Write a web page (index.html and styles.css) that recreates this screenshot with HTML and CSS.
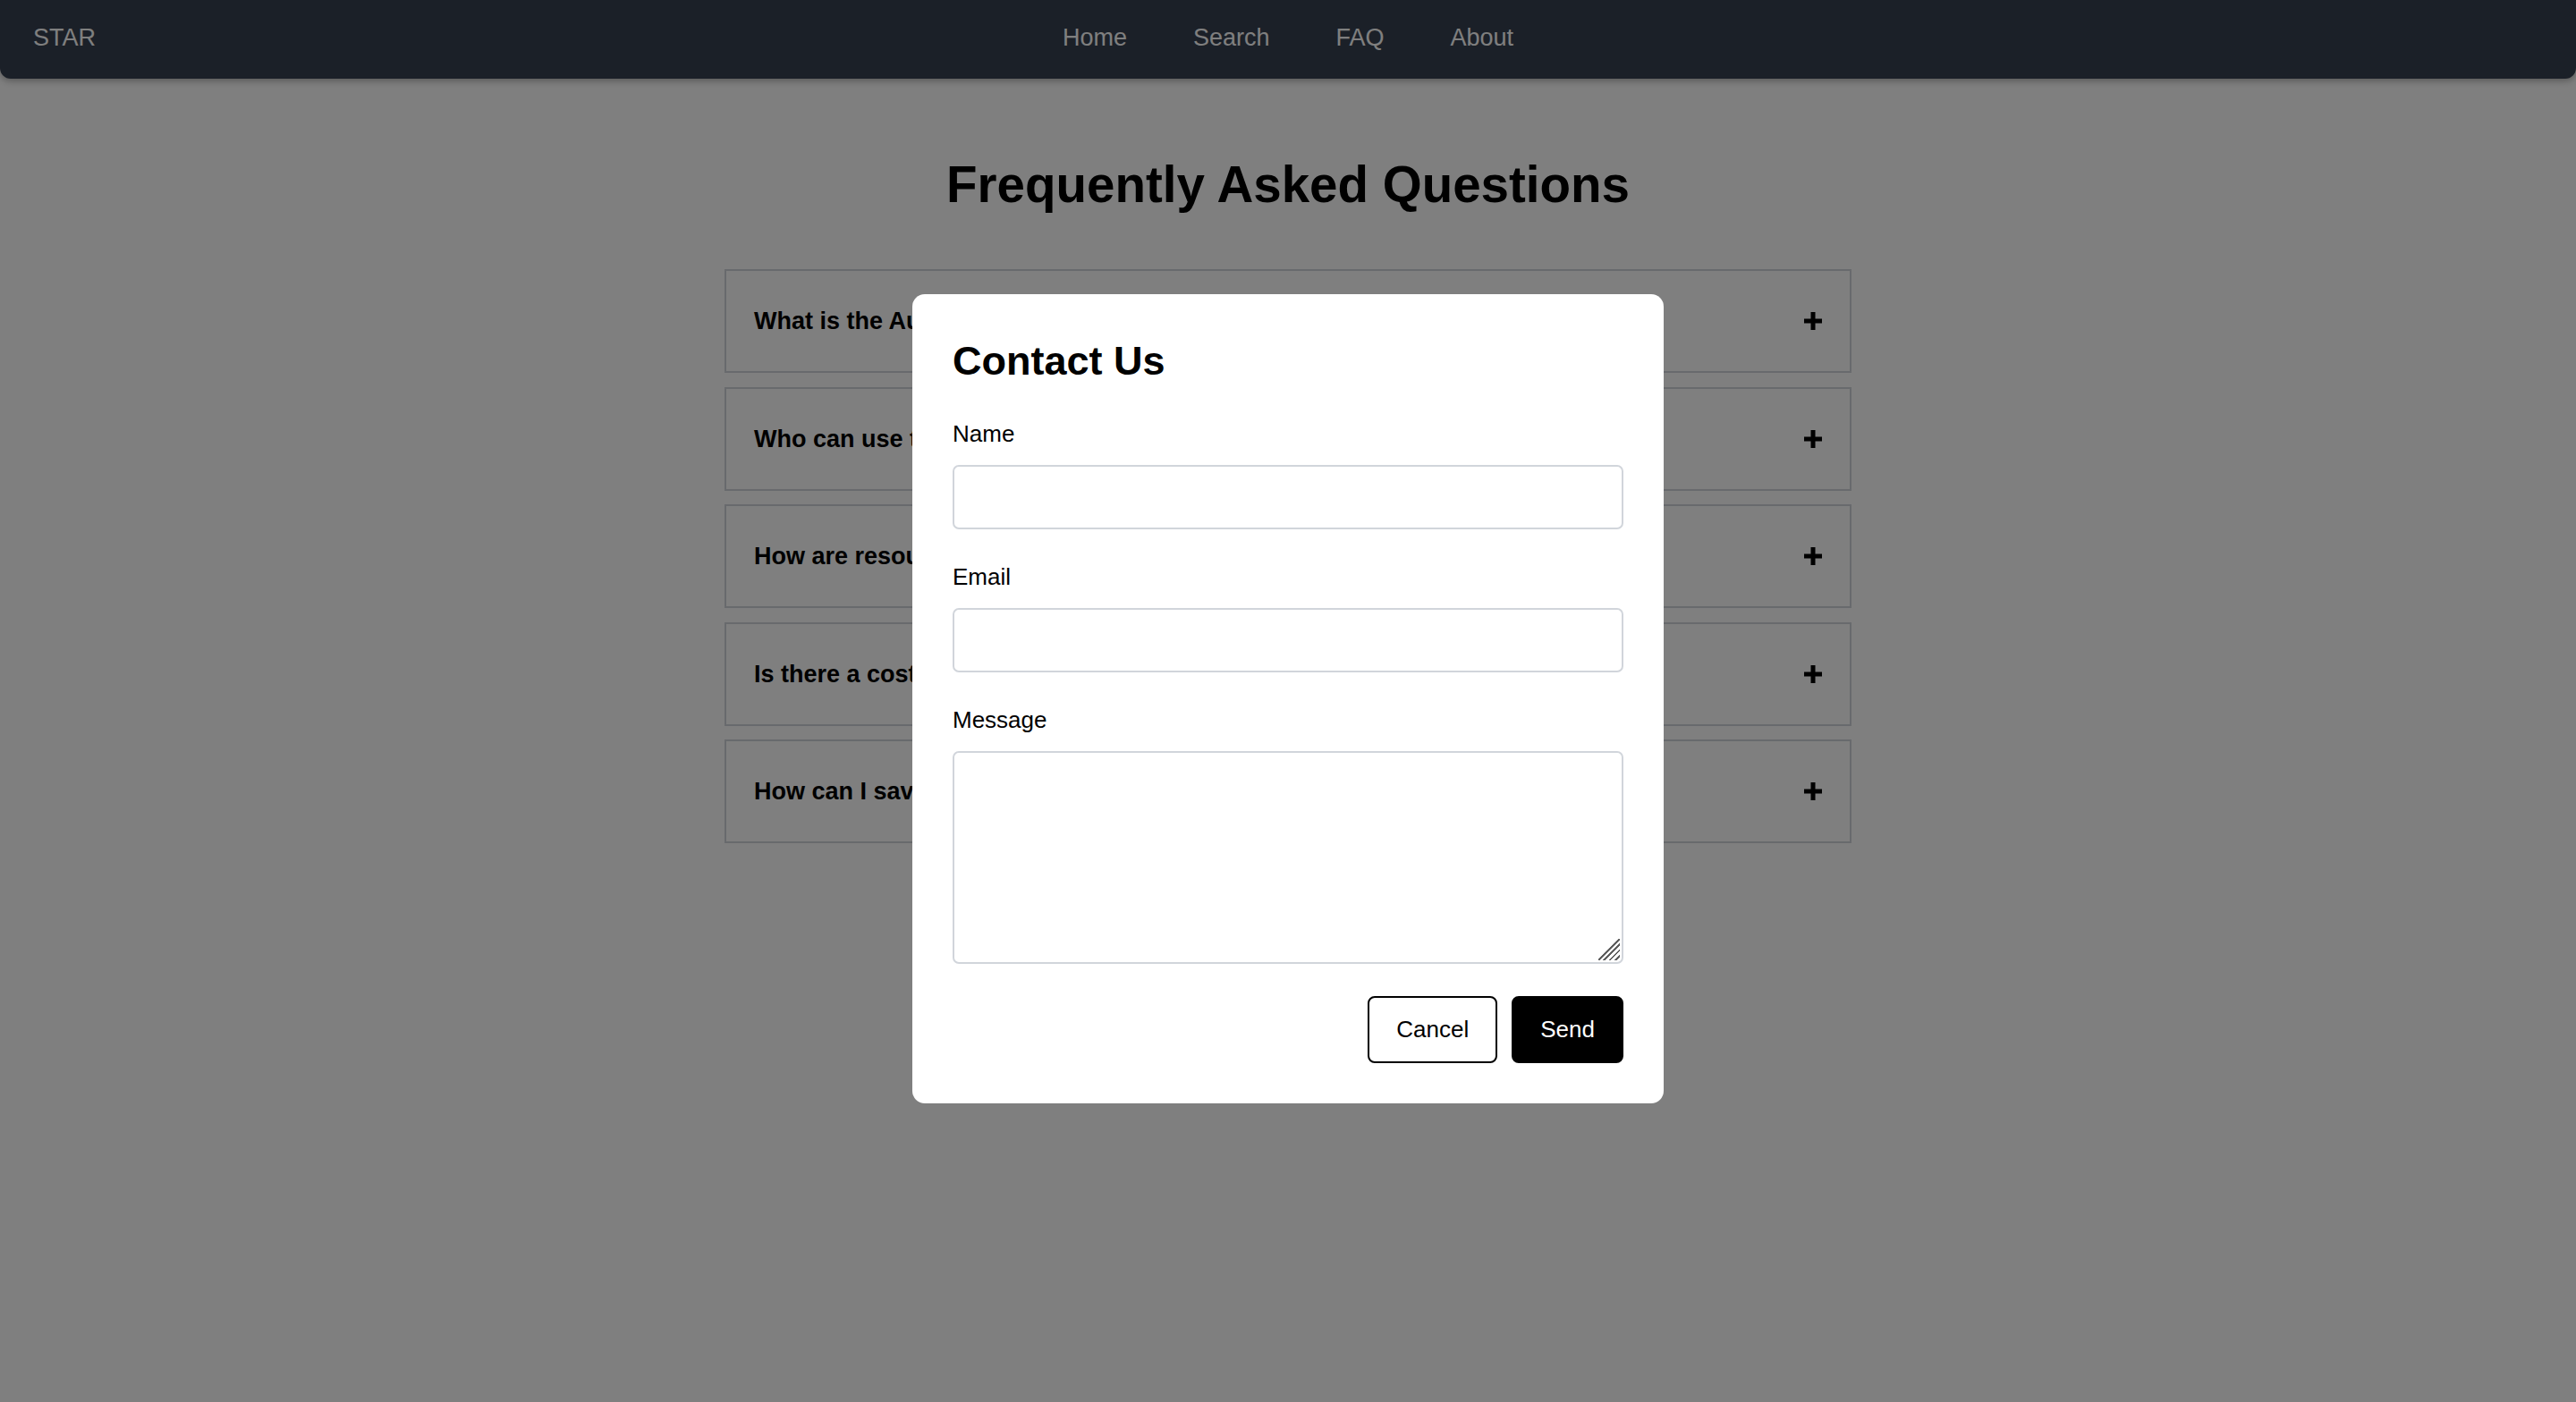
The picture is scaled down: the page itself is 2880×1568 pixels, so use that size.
FILE: index.html
```html
<!DOCTYPE html>
<html lang="en">
<head>
<meta charset="utf-8">
<title>STAR - FAQ</title>
<link rel="stylesheet" href="styles.css">
</head>
<body>
<header class="navbar">
  <div class="brand">STAR</div>
  <nav class="nav-links">
    <a href="#">Home</a>
    <a href="#">Search</a>
    <a href="#">FAQ</a>
    <a href="#">About</a>
  </nav>
  <div class="nav-spacer"></div>
</header>

<main class="page">
  <h1 class="page-title">Frequently Asked Questions</h1>
  <div class="faq-list">
    <div class="faq-item"><span class="faq-q">What is the Australian STAR database?</span><svg class="plus" viewBox="0 0 20 20" width="20" height="20"><rect x="7.5" y="0" width="5" height="20" fill="#000"/><rect x="0" y="7.5" width="20" height="5" fill="#000"/></svg></div>
    <div class="faq-item"><span class="faq-q">Who can use this service?</span><svg class="plus" viewBox="0 0 20 20" width="20" height="20"><rect x="7.5" y="0" width="5" height="20" fill="#000"/><rect x="0" y="7.5" width="20" height="5" fill="#000"/></svg></div>
    <div class="faq-item"><span class="faq-q">How are resources selected?</span><svg class="plus" viewBox="0 0 20 20" width="20" height="20"><rect x="7.5" y="0" width="5" height="20" fill="#000"/><rect x="0" y="7.5" width="20" height="5" fill="#000"/></svg></div>
    <div class="faq-item"><span class="faq-q">Is there a cost to use STAR?</span><svg class="plus" viewBox="0 0 20 20" width="20" height="20"><rect x="7.5" y="0" width="5" height="20" fill="#000"/><rect x="0" y="7.5" width="20" height="5" fill="#000"/></svg></div>
    <div class="faq-item"><span class="faq-q">How can I save my searches?</span><svg class="plus" viewBox="0 0 20 20" width="20" height="20"><rect x="7.5" y="0" width="5" height="20" fill="#000"/><rect x="0" y="7.5" width="20" height="5" fill="#000"/></svg></div>
  </div>
</main>

<div class="overlay">
  <div class="modal">
    <h2 class="modal-title">Contact Us</h2>
    <form class="contact-form">
      <div class="field">
        <label for="name">Name</label>
        <input id="name" type="text">
      </div>
      <div class="field">
        <label for="email">Email</label>
        <input id="email" type="email">
      </div>
      <div class="field field-last">
        <label for="message">Message</label>
        <div class="textarea-wrap">
          <textarea id="message"></textarea>
          <span class="resize-grip"></span>
        </div>
      </div>
      <div class="actions">
        <button type="button" class="btn btn-cancel">Cancel</button>
        <button type="button" class="btn btn-send">Send</button>
      </div>
    </form>
  </div>
</div>
</body>
</html>
```

FILE: styles.css
```css
* { box-sizing: border-box; }

html, body {
  margin: 0;
  padding: 0;
  background: #ffffff;
  font-family: "Liberation Sans", Arial, Helvetica, sans-serif;
  color: #000;
}

.navbar {
  height: 88px;
  background: #374151;
  border-radius: 0 0 12px 12px;
  box-shadow: 0 2px 8px rgba(0, 0, 0, 0.35);
  display: grid;
  grid-template-columns: 1fr auto 1fr;
  align-items: center;
  padding: 0 37px 4px;
}

.brand {
  color: #ffffff;
  font-size: 27px;
  line-height: 32px;
}

.nav-links {
  display: flex;
  gap: 74px;
}

.nav-links a {
  color: #ffffff;
  text-decoration: none;
  font-size: 27px;
  line-height: 32px;
}

.page {
  padding-top: 87px;
}

.page-title {
  margin: 0 0 62px;
  text-align: center;
  font-size: 56.5px;
  line-height: 64px;
  font-weight: bold;
}

.faq-list {
  width: 1260px;
  margin: 0 auto;
  display: flex;
  flex-direction: column;
  gap: 15.5px;
}

.faq-item {
  height: 116px;
  border: 2px solid #d1d5db;
  display: flex;
  align-items: center;
  justify-content: space-between;
  padding: 0 31px;
}

.faq-q {
  font-size: 27px;
  font-weight: bold;
  line-height: 32px;
}

.plus {
  display: block;
  flex: none;
}

.overlay {
  position: fixed;
  inset: 0;
  background: rgba(0, 0, 0, 0.5);
  display: flex;
  align-items: center;
  justify-content: center;
  padding-bottom: 6px;
}

.modal {
  width: 840px;
  background: #ffffff;
  border-radius: 14px;
  padding: 44px 45px 45px;
}

.modal-title {
  margin: 6px 0 41px;
  font-size: 45px;
  line-height: 50px;
  font-weight: bold;
}

.field {
  margin-bottom: 38px;
}

.field-last {
  margin-bottom: 36px;
}

.field label {
  display: block;
  font-size: 26px;
  line-height: 30px;
  margin-bottom: 20px;
}

.field input,
.field textarea {
  display: block;
  width: 100%;
  border: 2px solid #d1d5db;
  border-radius: 7px;
  background: #fff;
  font-family: inherit;
  font-size: 26px;
  padding: 0 14px;
  outline: none;
}

.field input {
  height: 72px;
}

.textarea-wrap {
  position: relative;
}

.field textarea {
  height: 238px;
  padding: 12px 14px;
  resize: none;
}

.resize-grip {
  position: absolute;
  right: 4px;
  bottom: 4px;
  width: 24px;
  height: 24px;
  pointer-events: none;
  background: linear-gradient(135deg,
    transparent 0 47%,
    #5f5f5f 47% 53%,
    transparent 53% 60%,
    #5f5f5f 60% 66%,
    transparent 66% 73%,
    #5f5f5f 73% 79%,
    transparent 79% 86%,
    #5f5f5f 86% 92%,
    transparent 92%);
}

.actions {
  display: flex;
  justify-content: flex-end;
  gap: 16px;
}

.btn {
  font-family: inherit;
  font-size: 26px;
  line-height: 31px;
  padding: 20px 30px;
  border: 2px solid #000;
  border-radius: 8px;
  cursor: pointer;
}

.btn-cancel {
  background: #ffffff;
  color: #000;
}

.btn-send {
  background: #000;
  color: #ffffff;
}
```
